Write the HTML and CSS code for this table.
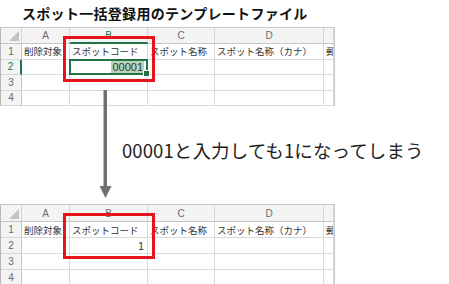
FILE: index.html
```html
<!DOCTYPE html>
<html lang="ja">
<head>
<meta charset="utf-8">
<link rel="stylesheet" href="styles.css">
</head>
<body>
<div class="page">
  <div class="title">スポット一括登録用のテンプレートファイル</div>

  <div class="sheet-wrap">
    <div class="sheet">
      <div class="hd corner"><span class="tri"></span></div>
      <div class="hd">A</div>
      <div class="hd hd-sel">B</div>
      <div class="hd">C</div>
      <div class="hd">D</div>
      <div class="hd"></div>

      <div class="rn">1</div>
      <div class="c">削除対象</div>
      <div class="c">スポットコード</div>
      <div class="c">スポット名称</div>
      <div class="c">スポット名称（カナ）</div>
      <div class="c clip">郵</div>

      <div class="rn rn-sel">2</div>
      <div class="c"></div>
      <div class="c num sel"><span class="hl">00001</span></div>
      <div class="c"></div>
      <div class="c"></div>
      <div class="c"></div>

      <div class="rn">3</div>
      <div class="c"></div><div class="c"></div><div class="c"></div><div class="c"></div><div class="c"></div>

      <div class="rn">4</div>
      <div class="c"></div><div class="c"></div><div class="c"></div><div class="c"></div><div class="c"></div>
    </div>
    <div class="redbox"></div>
  </div>

  <div class="middle">
    <p class="note">00001と入力しても1になってしまう</p>
  </div>

  <div class="sheet-wrap">
    <div class="sheet sheet-b">
      <div class="hd corner"><span class="tri"></span></div>
      <div class="hd">A</div>
      <div class="hd">B</div>
      <div class="hd">C</div>
      <div class="hd">D</div>
      <div class="hd"></div>

      <div class="rn">1</div>
      <div class="c">削除対象</div>
      <div class="c">スポットコード</div>
      <div class="c">スポット名称</div>
      <div class="c">スポット名称（カナ）</div>
      <div class="c clip">郵</div>

      <div class="rn">2</div>
      <div class="c"></div>
      <div class="c num">1</div>
      <div class="c"></div>
      <div class="c"></div>
      <div class="c"></div>

      <div class="rn">3</div>
      <div class="c"></div><div class="c"></div><div class="c"></div><div class="c"></div><div class="c"></div>

      <div class="rn">4</div>
      <div class="c"></div><div class="c"></div><div class="c"></div><div class="c"></div><div class="c"></div>
    </div>
    <div class="redbox redbox-b"></div>
  </div>

  <svg class="arrow" width="13" height="109" viewBox="0 0 13 109" aria-hidden="true">
    <rect x="4.5" y="0" width="3.5" height="97" fill="#707070"/>
    <polygon points="0.5,96 12.5,96 6.5,108" fill="#707070"/>
  </svg>
</div>
</body>
</html>
```

FILE: styles.css
```css
* { box-sizing: border-box; }

html, body {
  margin: 0;
  padding: 0;
  background: #ffffff;
}

body {
  font-family: "Noto Sans CJK JP", "Noto Sans", sans-serif;
  color: #222;
}

.page {
  position: relative;
  width: 449px;
  height: 284px;
  overflow: hidden;
}

.title {
  height: 27px;
  line-height: 27px;
  padding-left: 22px;
  font-size: 14px;
  font-weight: 700;
  letter-spacing: 0.3px;
  color: #111;
}

.sheet-wrap {
  position: relative;
  width: 335px;
}

.sheet {
  display: grid;
  grid-template-columns: 21px 48px 78px 67px 109px 10px;
  grid-template-rows: 16px repeat(4, 15.5px);
  border-top: 1px solid #c9c9c9;
  border-left: 1px solid #b8b8b8;
  border-right: 1px solid #c9c9c9;
  width: 335px;
  background: #fff;
}

.sheet-b {
  grid-template-rows: 17px repeat(4, 16px);
}

.hd {
  background: #f4f4f4;
  border-right: 1px solid #d6d6d6;
  border-bottom: 1px solid #c6c6c6;
  font-family: "Liberation Sans", "Noto Sans", sans-serif;
  font-size: 10px;
  color: #6a6a6a;
  display: flex;
  align-items: center;
  justify-content: center;
}

.corner {
  position: relative;
}

.tri {
  position: absolute;
  right: 2px;
  bottom: 2px;
  width: 0;
  height: 0;
  border-left: 10px solid transparent;
  border-bottom: 10px solid #c4c4c4;
}

.hd-sel {
  color: #217346;
  border-bottom: 2px solid #217346;
}

.rn {
  background: #f4f4f4;
  border-right: 1px solid #c6c6c6;
  border-bottom: 1px solid #d6d6d6;
  font-family: "Liberation Sans", "Noto Sans", sans-serif;
  font-size: 10px;
  color: #6a6a6a;
  display: flex;
  align-items: center;
  justify-content: center;
}

.rn-sel {
  color: #217346;
  border-right: 2px solid #217346;
}

.c {
  border-right: 1px solid #dadada;
  border-bottom: 1px solid #dadada;
  font-size: 9.5px;
  color: #333;
  display: flex;
  align-items: center;
  padding: 0 2px;
  white-space: nowrap;
  overflow: hidden;
}

.clip {
  padding: 0 0 0 2px;
}

.num {
  justify-content: flex-end;
  font-family: "Liberation Sans", "Noto Sans", sans-serif;
  font-size: 11px;
  padding-right: 3px;
}

.sel {
  position: relative;
  overflow: visible;
}

.sel::after {
  content: "";
  position: absolute;
  left: -1px;
  top: -1px;
  right: -1px;
  bottom: -1px;
  border: 2px solid #217346;
}

.sel::before {
  content: "";
  position: absolute;
  right: -3px;
  bottom: -3px;
  width: 5px;
  height: 5px;
  background: #217346;
  border: 1px solid #fff;
  z-index: 2;
}

.hl {
  background: #b4d5bd;
  padding: 1px 1px;
  line-height: 12px;
}

.redbox {
  position: absolute;
  left: 63px;
  top: 9px;
  width: 92px;
  height: 46px;
  border: 3px solid #e8141b;
  pointer-events: none;
}

.redbox-b {
  top: 9px;
  width: 92px;
  height: 46px;
}

.middle {
  height: 98px;
  display: flex;
  align-items: center;
  padding-left: 122px;
  padding-bottom: 10px;
}

.note {
  margin: 0;
  font-size: 18.5px;
  color: #1e1e1e;
  letter-spacing: 0.1px;
}

.arrow {
  position: absolute;
  left: 99px;
  top: 90px;
}
```
